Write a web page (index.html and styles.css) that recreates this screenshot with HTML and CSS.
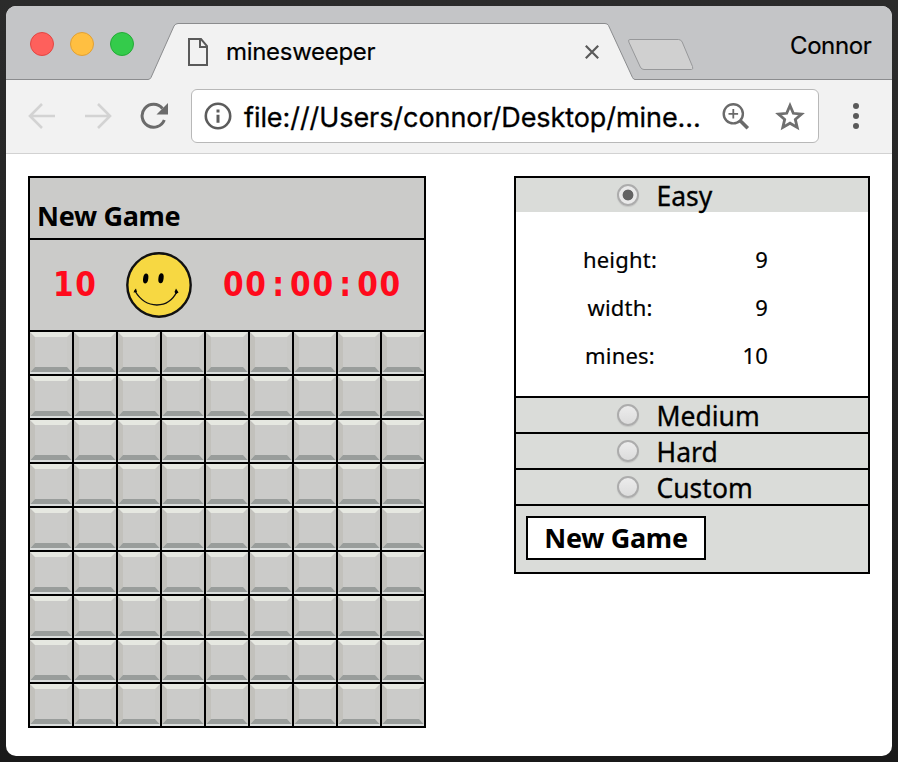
FILE: index.html
```html
<!DOCTYPE html>
<html lang="en">
<head>
<meta charset="utf-8">
<title>minesweeper</title>
<link rel="stylesheet" href="styles.css">
</head>
<body>
<div class="window">
  <header class="tabstrip">
    <svg class="tab-shapes" width="886" height="74" viewBox="0 0 886 74" aria-hidden="true">
      <path d="M0 73.500H142Q144 73.500 145 71.500L168 20Q169.500 17.500 172 17.500H599Q601.500 17.500 602.500 19.500L626.500 71.500Q627.500 73.500 629 73.500H886V74H0Z" fill="#f2f2f2"/>
      <path d="M0 73.500H142Q144 73.500 145 71.500L168 20Q169.500 17.500 172 17.500H599Q601.500 17.500 602.500 19.500L626.500 71.500Q627.500 73.500 629 73.500H886" fill="none" stroke="#8b8c8e"/>
      <path d="M624 33.500H672.500Q675 33.500 676.200 36L686.500 60.500Q687.500 63.500 685.500 63.500H638Q635.500 63.500 634.300 61L622.800 36Q621.800 33.500 624 33.500Z" fill="#d0d0d0" stroke="#97989a"/>
    </svg>
    <div class="lights"><i class="red"></i><i class="amber"></i><i class="green"></i></div>
    <svg class="doc" width="20" height="28" viewBox="0 0 20 28"><path d="M1 1H13L19 8V27H1ZM12 1V9H19" fill="none" stroke="#5a5a5a" stroke-width="2"/></svg>
    <span class="tab-title">minesweeper</span>
    <svg class="close" width="14" height="14" viewBox="0 0 14 14"><path d="M.8.8 13.200 13.200M13.200.8.8 13.200" stroke="#5a5a5a" stroke-width="2.200"/></svg>
    <span class="profile">Connor</span>
  </header>
  <nav class="toolbar">
    <svg class="back" width="28" height="26" viewBox="0 0 28 26"><path d="M27 13H2M14 1 2 13 14 25" fill="none" stroke="#d3d3d3" stroke-width="2.600"/></svg>
    <svg class="forward" width="28" height="26" viewBox="0 0 28 26"><path d="M1 13H26M14 1 26 13 14 25" fill="none" stroke="#d3d3d3" stroke-width="2.600"/></svg>
    <svg class="reload" width="28" height="28" viewBox="0 0 28 28"><path d="M22.500 6.500A11.500 11.500 0 1 0 24.300 18" fill="none" stroke="#6b6b6b" stroke-width="3"/><path d="M28 1V12.500H16.500Z" fill="#6b6b6b"/></svg>
    <div class="address">
      <svg class="info" width="28" height="28" viewBox="0 0 28 28"><circle cx="14" cy="14" r="12.200" fill="none" stroke="#5c5c5c" stroke-width="2.600"/><path d="M14 7.500v3M14 12.700v8" stroke="#5c5c5c" stroke-width="3"/></svg>
      <span class="url">file:///Users/connor/Desktop/mine...</span>
      <svg class="magnify" width="28" height="28" viewBox="0 0 28 28"><circle cx="11.300" cy="11.800" r="9.600" fill="none" stroke="#6a6a6a" stroke-width="2.400"/><path d="M17.500 18 25.800 26.300" stroke="#6a6a6a" stroke-width="3.600"/><path d="M11.300 7v9.600M6.500 11.800h9.600" stroke="#6a6a6a" stroke-width="1.800"/></svg>
      <svg class="star" width="30" height="29" viewBox="0 0 30 29"><path d="M15 3.500 18.300 11.300 26.500 12 20.300 17.400 22.200 25.400 15 21.200 7.800 25.400 9.700 17.400 3.500 12 11.700 11.300Z" fill="none" stroke="#6f6f6f" stroke-width="2.800"/></svg>
    </div>
    <div class="menu"><i></i><i></i><i></i></div>
  </nav>
  <main class="page">
    <section class="game">
      <div class="game-title"><span>New Game</span></div>
      <div class="status">
        <span class="count">10</span>
        <svg class="face" width="66" height="66" viewBox="0 0 66 66">
          <circle cx="33" cy="33" r="31.700" fill="#f7d842" stroke="#111" stroke-width="2.400"/>
          <ellipse cx="19.700" cy="26.500" rx="2.600" ry="5" transform="rotate(8 19.700 26.500)"/>
          <ellipse cx="35" cy="26.300" rx="2.600" ry="5" transform="rotate(8 35 26.300)"/>
          <path d="M9 39C20 57.500 42 57.500 51 39.500" fill="none" stroke="#111" stroke-width="1.400"/>
          <path d="M7.500 40.500Q8 38 10 36.500L11 40ZM48.500 40 50 36.500 52.500 40.500 50 42Z"/>
        </svg>
        <span class="timer">00<b>:</b>00<b>:</b>00</span>
      </div>
      <div class="board" id="board"></div>
    </section>
    <form class="settings">
      <label class="level"><i class="radio on"></i><span>Easy</span></label>
      <div class="details">
        <div class="row"><span class="name">height:</span><span class="value">9</span></div>
        <div class="row"><span class="name">width:</span><span class="value">9</span></div>
        <div class="row"><span class="name">mines:</span><span class="value">10</span></div>
      </div>
      <label class="level ruled"><i class="radio"></i><span>Medium</span></label>
      <label class="level ruled"><i class="radio"></i><span>Hard</span></label>
      <label class="level ruled"><i class="radio"></i><span>Custom</span></label>
      <div class="actions"><button type="button">New Game</button></div>
    </form>
  </main>
</div>
<script src="board.js"></script>
</body>
</html>
```
FILE: styles.css
```css
* { box-sizing: border-box; }
body {
  margin: 0;
  width: 898px;
  height: 762px;
  padding: 6px;
  overflow: hidden;
  background: linear-gradient(#2b2b2b, #191919);
  color: #000;
  font-family: "Noto Sans", sans-serif;
}
svg { display: block; flex: none; }
.window {
  width: 886px;
  height: 750px;
  border-radius: 10px;
  overflow: hidden;
  background: #fff;
}
.tabstrip {
  position: relative;
  display: flex;
  height: 74px;
  background: #c4c5c7;
  font-family: Inter, sans-serif;
  line-height: 30px;
  white-space: nowrap;
}
.tab-shapes { position: absolute; left: 0; top: 0; }
.tabstrip > :not(.tab-shapes) { position: relative; }
.lights { display: flex; gap: 16px; margin: 26px 0 0 24px; }
.lights i { width: 24px; height: 24px; border-radius: 50%; border: 1px solid transparent; }
.lights .red { background: #fe605c; border-color: #e24643; }
.lights .amber { background: #ffbf41; border-color: #e0a035; }
.lights .green { background: #34cb4b; border-color: #24ab37; }
.doc { margin: 32px 0 0 54px; }
.tab-title { width: 150px; margin: 31px 0 0 18px; font-size: 24px; letter-spacing: -.3px; -webkit-text-stroke: .2px #000; }
.close { margin: 39px 0 0 209px; }
.profile { width: 82px; margin: 25px 0 0 191px; font-size: 24px; letter-spacing: -.4px; -webkit-text-stroke: .2px #000; }
.toolbar {
  display: flex;
  align-items: center;
  height: 74px;
  padding-bottom: 2px;
  background: #f2f2f2;
  border-bottom: 1px solid #d2d2d2;
}
.back { margin-left: 22px; }
.forward { margin-left: 28px; }
.reload { margin-left: 28px; }
.address {
  display: flex;
  align-items: center;
  width: 628px;
  height: 54px;
  margin: 1px 0 0 23px;
  padding-left: 12px;
  background: #fff;
  border: 1px solid #b8b8b8;
  border-radius: 6px;
}
.url {
  width: 458px;
  margin: 3px 0 0 12px;
  font: 27px/36px Inter, sans-serif;
  letter-spacing: -.07px;
  white-space: nowrap;
  -webkit-text-stroke: .3px #000;
}
.magnify { margin-left: 20px; }
.star { margin-left: 25px; }
.menu { display: flex; flex-direction: column; gap: 4px; margin-left: 34px; }
.menu i { width: 6px; height: 6px; border-radius: 50%; background: #5a5a5a; }
.page { display: flex; align-items: flex-start; gap: 88px; padding: 22px 22px 0; }
.game { width: 398px; border: 2px solid #000; border-bottom: 0; background: #cbcbc9; }
.game-title {
  height: 62px;
  padding: 18px 0 0 7px;
  border-bottom: 2px solid #000;
  font-size: 27px;
  font-weight: 700;
  letter-spacing: -.3px;
  line-height: 40px;
}
.status {
  display: flex;
  align-items: center;
  height: 92px;
  border-bottom: 2px solid #000;
  color: #ff0a1c;
  font: bold 33px/40px "DejaVu Sans Condensed", "DejaVu Sans", sans-serif;
  font-stretch: condensed;
  letter-spacing: 1.7px;
}
.count { width: 45px; margin-left: 23px; }
.face { margin-left: 28px; }
.timer { display: flex; margin-left: 31px; }
.timer b { width: 22.400px; text-align: center; }
.board {
  display: grid;
  grid-template-columns: repeat(9, 42px);
  grid-auto-rows: 42px;
  gap: 2px;
  background: #000;
  border-bottom: 2px solid #000;
}
.settings { width: 356px; border: 2px solid #000; background: #dadcd9; }
.level {
  display: flex;
  height: 34px;
  padding-left: 101px;
  font-size: 26.500px;
  line-height: 37px;
  -webkit-text-stroke: .3px #000;
}
.ruled { height: 36px; border-top: 2px solid #000; }
.radio {
  width: 22px;
  height: 22px;
  margin: 6px 17.500px 0 0;
  border: 2px solid #acacac;
  border-radius: 50%;
  background: linear-gradient(#ececec, #dcdcdc);
  box-shadow: 0 1px 1px #c6c7c5;
}
.on { background: radial-gradient(circle, #636363 5px, #eaeaea 5.8px); }
.details { height: 184px; padding-top: 23px; background: #fff; font-size: 22px; }
.row { display: flex; height: 48px; line-height: 48px; letter-spacing: .2px; -webkit-text-stroke: .2px #000; }
.name { width: 80px; margin-left: 64px; text-align: center; }
.value { width: 60px; margin-left: 48px; text-align: right; }
.actions { height: 68px; padding: 10px; border-top: 2px solid #000; }
button {
  width: 180px;
  height: 44px;
  padding: 0;
  border: 2px solid #000;
  background: #fff;
  color: #000;
  font: bold 27px/38px "Noto Sans", sans-serif;
  letter-spacing: -.3px;
}
```
FILE: board.js
```js
const tile = `<svg width="42" height="42" viewBox="0 0 42 42">
<path d="M0 0H42V42H0Z" fill="#cbcbc9"/>
<path d="M0 0 5 5V35L0 40Z" fill="#c2c1bc"/>
<path d="M42 0 37 5V35L42 40Z" fill="#c9c9c6"/>
<path d="M0 0H42L37 5H5Z" fill="#e6e8e1"/>
<path d="M5 35H37L41.500 40H.5Z" fill="#999d9b"/>
<path d="M0 40H42V42H0Z" fill="#dadddc"/>
</svg>`;
document.getElementById("board").innerHTML = tile.repeat(81);
```
